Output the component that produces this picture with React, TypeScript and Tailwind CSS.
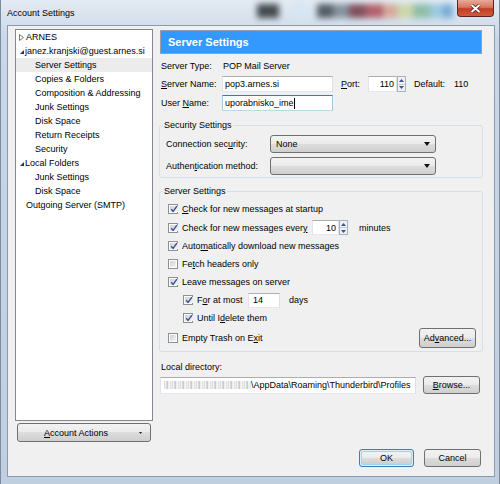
import React from 'react';

const btn =
  'bg-[linear-gradient(#f2f2f2_0%,#ebebeb_49%,#dddddd_50%,#cfcfcf_100%)] border border-[#707070] rounded-[3px] flex items-center justify-center';
const field = 'bg-white border border-[#abadb3] border-l-[#e2e3ea] border-r-[#dbdfe6] border-b-[#e3e9ef]';

function U({ children }: { children: React.ReactNode }) {
  return <span className="underline underline-offset-[1px] decoration-[1px]">{children}</span>;
}

function Check({ on }: { on?: boolean }) {
  return (
    <span className="w-[10px] h-[10px] border border-[#8e8f8f] bg-white p-[1px] flex shrink-0">
      <span className="flex-1 flex items-center justify-center bg-[linear-gradient(135deg,#cdd1d7,#f5f5f5)]">
        {on && (
          <svg width="8" height="8" viewBox="0 0 8 8">
            <path d="M1.2 4.2 L3.1 6.4 L6.9 1.2" stroke="#3a4f93" strokeWidth="1.4" fill="none" />
          </svg>
        )}
      </span>
    </span>
  );
}

function Spin({ h = 16 }: { h?: number }) {
  return (
    <div
      className="w-[9px] flex flex-col border border-[#a9b3c0] bg-[#eef1f5]"
      style={{ height: h }}
    >
      <div className="flex-1 flex items-center justify-center border-b border-[#c6ccd4]">
        <svg width="5" height="3" viewBox="0 0 5 3">
          <path d="M0 3 L2.5 0 L5 3z" fill="#3d5488" />
        </svg>
      </div>
      <div className="flex-1 flex items-center justify-center">
        <svg width="5" height="3" viewBox="0 0 5 3">
          <path d="M0 0 L5 0 L2.5 3z" fill="#3d5488" />
        </svg>
      </div>
    </div>
  );
}

function Combo({ value }: { value?: string }) {
  return (
    <div className={`w-[166px] h-[18px] ${btn} !justify-between pl-[5px] pr-[5px]`}>
      <span>{value}</span>
      <svg width="6" height="4" viewBox="0 0 6 4">
        <path d="M0 0 L6 0 L3 4z" fill="#111" />
      </svg>
    </div>
  );
}

function Row({ on, h = 18, children }: { on?: boolean; h?: number; children: React.ReactNode }) {
  return (
    <div className="flex items-center" style={{ height: h }}>
      <Check on={on} />
      <span className="ml-[4px] flex items-center">{children}</span>
    </div>
  );
}

const tree = [
  { t: 'ARNES', lvl: 0, tri: 'closed' },
  { t: 'janez.kranjski@guest.arnes.si', lvl: 0, tri: 'open' },
  { t: 'Server Settings', lvl: 1, sel: true },
  { t: 'Copies & Folders', lvl: 1 },
  { t: 'Composition & Addressing', lvl: 1 },
  { t: 'Junk Settings', lvl: 1 },
  { t: 'Disk Space', lvl: 1 },
  { t: 'Return Receipts', lvl: 1 },
  { t: 'Security', lvl: 1 },
  { t: 'Local Folders', lvl: 0, tri: 'open' },
  { t: 'Junk Settings', lvl: 1 },
  { t: 'Disk Space', lvl: 1 },
  { t: 'Outgoing Server (SMTP)', lvl: 0 },
];

export default function App() {
  return (
    <div className="w-[500px] h-[484px] relative overflow-hidden flex flex-col bg-[linear-gradient(#e3ebf3,#c9d7e6_40px,#bfcfe0)] border-l border-r border-[#7a8ca3] font-['Liberation_Sans',Arial,sans-serif] text-[9px] leading-[12px] text-black">
      {/* title bar */}
      <div className="h-[25px] relative flex items-center pl-[6px] shrink-0">
        <div className="absolute left-[256px] top-[4px] flex blur-[3px] opacity-80">
          <div className="w-[22px] h-[14px] bg-[#1f2326]" />
          <div className="w-[12px] h-[14px]" />
          <div className="w-[20px] h-[14px] bg-[#d5e6f5]" />
          <div className="w-[6px] h-[14px]" />
          <div className="w-[16px] h-[14px] bg-[#303a42]" />
          <div className="w-[16px] h-[14px] bg-[#6e7d8a]" />
          <div className="w-[17px] h-[14px] bg-[#6a2a36]" />
          <div className="w-[17px] h-[14px] bg-[#a8404c]" />
          <div className="w-[14px] h-[14px] bg-[#d49a86]" />
          <div className="w-[16px] h-[14px] bg-[#c9d39a]" />
          <div className="w-[17px] h-[14px] bg-[#7ab495]" />
          <div className="w-[13px] h-[14px] bg-[#8ec0db]" />
          <div className="w-[10px] h-[14px] bg-[#5b9bd1]" />
        </div>
        <span className="relative">Account Settings</span>
        <div className="absolute top-0 right-[5px] w-[37px] h-[17px] rounded-b-[4px] border border-t-0 border-[#5a2621] bg-[linear-gradient(#e9a99a_0%,#d6775f_45%,#c23d26_55%,#d35a3c_100%)] flex items-center justify-center">
          <svg width="11" height="9" viewBox="0 0 11 9">
            <path d="M1.5 1 L9.5 8 M9.5 1 L1.5 8" stroke="#4a1a14" strokeWidth="3.4" />
            <path d="M1.5 1 L9.5 8 M9.5 1 L1.5 8" stroke="#fff" strokeWidth="2" />
          </svg>
        </div>
      </div>

      {/* client area */}
      <div className="ml-[6px] mr-[4px] h-[452px] border border-[#8a9bb0] bg-[#f0f0f0] flex pl-[7px] pt-[3px]">
        {/* left column */}
        <div className="w-[138px] flex flex-col">
          <div className="h-[392px] border border-[#828790] bg-white pt-0">
            {tree.map((n, i) => (
              <div
                key={i}
                className={`h-[14px] flex items-center ${n.sel ? 'bg-[#ececec]' : ''} ${
                  n.lvl === 1 ? 'pl-[19px]' : n.tri ? 'pl-[3px]' : 'pl-[10px]'
                }`}
              >
                {n.tri === 'closed' && (
                  <svg width="5" height="7" viewBox="0 0 5 7" className="mr-[2px]">
                    <path d="M0.5 0.5 L4.5 3.5 L0.5 6.5z" fill="none" stroke="#777" strokeWidth="1" />
                  </svg>
                )}
                {n.tri === 'open' && (
                  <svg width="5" height="7" viewBox="0 0 5 7" className="mr-[1px]">
                    <path d="M5 2 L5 6 L1 6z" fill="#333" />
                  </svg>
                )}
                <span>{n.t}</span>
              </div>
            ))}
          </div>
          <div className={`mt-[2px] ml-[2px] w-[134px] h-[19px] ${btn} !justify-start pl-[26px] pr-[8px]`}>
            <span>
              <U>A</U>ccount Actions
            </span>
            <svg width="3" height="2" viewBox="0 0 3 2" className="ml-auto">
              <path d="M0 0 L3 0 L1.5 2z" fill="#222" />
            </svg>
          </div>
        </div>

        {/* right column */}
        <div className="ml-[6px] w-[324px] flex flex-col">
          <div className="ml-[1px] mt-[1px] w-[322px] h-[24px] bg-[#3399ff] border border-[#9a9fa6] flex items-center pl-[7px] text-white font-bold text-[11px]">
            Server Settings
          </div>

          <div className="mt-[5px] h-[14px] flex items-center pl-[2px]">
            <span className="w-[62px]">Server Type:</span>
            <span>POP Mail Server</span>
          </div>

          <div className="mt-[3px] h-[16px] flex items-center pl-[2px]">
            <span className="w-[61px]">
              <U>S</U>erver Name:
            </span>
            <div className={`w-[111px] h-[16px] ${field} flex items-center pl-[2px]`}>pop3.arnes.si</div>
            <span className="ml-[8px] w-[27px]">
              <U>P</U>ort:
            </span>
            <div className={`w-[29px] h-[16px] ${field} flex items-center justify-end pr-[2px]`}>110</div>
            <Spin />
            <span className="ml-[8px] w-[40px]">Default:</span>
            <span>110</span>
          </div>

          <div className="mt-[3px] h-[16px] flex items-center pl-[2px]">
            <span className="w-[61px]">
              User <U>N</U>ame:
            </span>
            <div className="w-[111px] h-[16px] bg-white border border-[#3d7bad] border-l-[#a4c9e3] border-r-[#a4c9e3] border-b-[#b7d9ed] flex items-center pl-[2px]">
              uporabnisko_ime<span className="w-[1px] h-[11px] bg-black" />
            </div>
          </div>

          <fieldset className="mt-[8px] border border-[#d5dfe5] rounded-[3px]">
            <legend className="ml-[3px] px-[1px] leading-[12px]">Security Settings</legend>
            <div className="pl-[6px] pt-[4px] pb-[2px] flex flex-col gap-[4px]">
              <div className="h-[18px] flex items-center">
                <span className="w-[104px]">
                  Connection sec<U>u</U>rity:
                </span>
                <Combo value="None" />
              </div>
              <div className="h-[18px] flex items-center">
                <span className="w-[104px]">
                  Authen<U>t</U>ication method:
                </span>
                <Combo />
              </div>
            </div>
          </fieldset>

          <fieldset className="mt-[7px] border border-[#d5dfe5] rounded-[3px]">
            <legend className="ml-[3px] px-[1px] leading-[12px]">Server Settings</legend>
            <div className="pl-[8px] pt-[2px] pb-[3px] flex flex-col">
              <Row on h={19}>
                <U>C</U>heck for new messages at startup
              </Row>
              <Row on h={19}>
                <span className="w-[130px]">
                  Check for new messages ever<U>y</U>
                </span>
                <div className={`w-[27px] h-[15px] ${field} flex items-center justify-end pr-[2px]`}>10</div>
                <Spin h={15} />
                <span className="ml-[11px]">minutes</span>
              </Row>
              <Row on>
                Auto<U>m</U>atically download new messages
              </Row>
              <Row>
                Fe<U>t</U>ch headers only
              </Row>
              <Row on>Leave messages on server</Row>
              <div className="ml-[15px]">
                <Row on>
                  <span className="w-[51px]">
                    F<U>o</U>r at most
                  </span>
                  <div className={`w-[32px] h-[15px] ${field} flex items-center pl-[4px]`}>14</div>
                  <span className="ml-[9px]">days</span>
                </Row>
                <Row on>
                  Until I <U>d</U>elete them
                </Row>
              </div>
              <div className="h-[21px] flex items-center pr-[6px]">
                <Check />
                <span className="ml-[4px]">
                  Empty Trash on E<U>x</U>it
                </span>
                <div className={`ml-auto w-[57px] h-[20px] ${btn}`}>
                  <span>
                    Ad<U>v</U>anced...
                  </span>
                </div>
              </div>
            </div>
          </fieldset>

          <div className="mt-[9px] h-[12px] pl-[2px] flex items-center">Local directory:</div>
          <div className="mt-[3px] h-[18px] flex items-center">
            <div className={`ml-[1px] w-[256px] h-[17px] ${field} flex items-center pl-[3px] overflow-hidden whitespace-nowrap`}>
              <div className="w-[87px] h-[8px] shrink-0 blur-[0.6px] opacity-70 bg-[repeating-linear-gradient(90deg,#bdbdbd_0px,#ffffff_2px,#9e9e9e_3px,#ffffff_5px,#d0d0d0_7px,#ffffff_8px)]" />
              <span>\AppData\Roaming\Thunderbird\Profiles</span>
            </div>
            <div className={`ml-[7px] w-[57px] h-[18px] ${btn}`}>
              <span>
                <U>B</U>rowse...
              </span>
            </div>
          </div>

          <div className="mt-[55px] h-[18px] flex justify-end pr-[2px] gap-[10px]">
            <div className="w-[55px] h-[18px] rounded-[3px] border border-[#3c7fb1] p-[1px] bg-[#dbeef9]">
              <div className="w-full h-full rounded-[2px] bg-[linear-gradient(#f2f2f2_0%,#ebebeb_49%,#dddddd_50%,#cfcfcf_100%)] flex items-center justify-center border border-[#9fd3f0]">
                OK
              </div>
            </div>
            <div className={`w-[57px] h-[18px] ${btn}`}>Cancel</div>
          </div>
        </div>
      </div>
    </div>
  );
}
